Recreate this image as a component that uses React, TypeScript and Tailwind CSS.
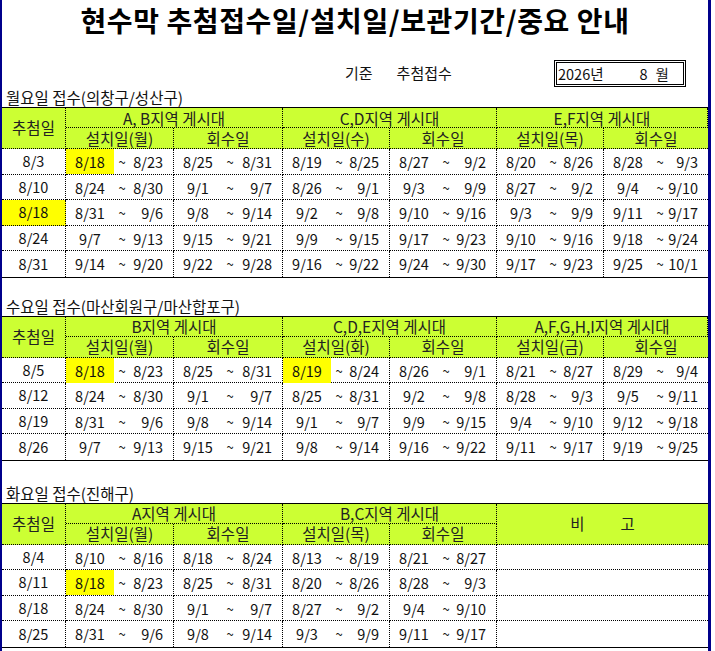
import React from "react";

type R = [string, string, boolean?];
type Row = { d: string; dh?: boolean; r: R[] };
type Group = { name: string; sub: string };
type Sec = { title: string; groups: Group[]; rows: Row[]; note?: boolean };

const sections: Sec[] = [
  {
    title: "월요일 접수(의창구/성산구)",
    groups: [
      { name: "A, B지역 게시대", sub: "설치일(월)" },
      { name: "C,D지역 게시대", sub: "설치일(수)" },
      { name: "E,F지역 게시대", sub: "설치일(목)" },
    ],
    rows: [
      { d: "8/3", r: [["8/18", "8/23", true], ["8/25", "8/31"], ["8/19", "8/25"], ["8/27", "9/2"], ["8/20", "8/26"], ["8/28", "9/3"]] },
      { d: "8/10", r: [["8/24", "8/30"], ["9/1", "9/7"], ["8/26", "9/1"], ["9/3", "9/9"], ["8/27", "9/2"], ["9/4", "9/10"]] },
      { d: "8/18", dh: true, r: [["8/31", "9/6"], ["9/8", "9/14"], ["9/2", "9/8"], ["9/10", "9/16"], ["9/3", "9/9"], ["9/11", "9/17"]] },
      { d: "8/24", r: [["9/7", "9/13"], ["9/15", "9/21"], ["9/9", "9/15"], ["9/17", "9/23"], ["9/10", "9/16"], ["9/18", "9/24"]] },
      { d: "8/31", r: [["9/14", "9/20"], ["9/22", "9/28"], ["9/16", "9/22"], ["9/24", "9/30"], ["9/17", "9/23"], ["9/25", "10/1"]] },
    ],
  },
  {
    title: "수요일 접수(마산회원구/마산합포구)",
    groups: [
      { name: "B지역 게시대", sub: "설치일(월)" },
      { name: "C,D,E지역 게시대", sub: "설치일(화)" },
      { name: "A,F,G,H,I지역 게시대", sub: "설치일(금)" },
    ],
    rows: [
      { d: "8/5", r: [["8/18", "8/23", true], ["8/25", "8/31"], ["8/19", "8/24", true], ["8/26", "9/1"], ["8/21", "8/27"], ["8/29", "9/4"]] },
      { d: "8/12", r: [["8/24", "8/30"], ["9/1", "9/7"], ["8/25", "8/31"], ["9/2", "9/8"], ["8/28", "9/3"], ["9/5", "9/11"]] },
      { d: "8/19", r: [["8/31", "9/6"], ["9/8", "9/14"], ["9/1", "9/7"], ["9/9", "9/15"], ["9/4", "9/10"], ["9/12", "9/18"]] },
      { d: "8/26", r: [["9/7", "9/13"], ["9/15", "9/21"], ["9/8", "9/14"], ["9/16", "9/22"], ["9/11", "9/17"], ["9/19", "9/25"]] },
    ],
  },
  {
    title: "화요일 접수(진해구)",
    note: true,
    groups: [
      { name: "A지역 게시대", sub: "설치일(월)" },
      { name: "B,C지역 게시대", sub: "설치일(목)" },
    ],
    rows: [
      { d: "8/4", r: [["8/10", "8/16"], ["8/18", "8/24"], ["8/13", "8/19"], ["8/21", "8/27"]] },
      { d: "8/11", r: [["8/18", "8/23", true], ["8/25", "8/31"], ["8/20", "8/26"], ["8/28", "9/3"]] },
      { d: "8/18", r: [["8/24", "8/30"], ["9/1", "9/7"], ["8/27", "9/2"], ["9/4", "9/10"]] },
      { d: "8/25", r: [["8/31", "9/6"], ["9/8", "9/14"], ["9/3", "9/9"], ["9/11", "9/17"]] },
    ],
  },
];

function Table({ s }: { s: Sec }) {
  const n = s.rows.length;
  return (
    <div className="grid grid-cols-[64px_108px_109px_107px_107px_107px_104px] border-t border-b border-black text-[#111]">
      <div className="row-span-2 bg-[#ccff33] border-r border-b border-dotted border-black flex items-center justify-center text-[15.5px] text-[#222]">
        추첨일
      </div>
      {s.groups.map((g, i) => (
        <div
          key={"g" + i}
          className="col-span-2 h-[20px] bg-[#ccff33] border-r border-b border-dotted border-black flex items-center justify-center text-[15.5px] leading-[20px] text-[#222]"
        >
          {g.name}
        </div>
      ))}
      {s.note && (
        <div className="col-span-2 row-span-2 bg-[#ccff33] border-b border-dotted border-black flex items-center justify-center text-[15.5px] text-[#222]">
          <span>비</span>
          <span className="ml-[36px]">고</span>
        </div>
      )}
      {s.groups.map((g, i) => (
        <React.Fragment key={"s" + i}>
          <div className="h-[21px] bg-[#ccff33] border-r border-b border-dotted border-black flex items-center justify-center text-[15.5px] leading-[21px] text-[#222]">
            {g.sub}
          </div>
          <div
            className={
              "h-[21px] bg-[#ccff33] border-b border-dotted border-black flex items-center justify-center text-[15.5px] leading-[21px] text-[#222] " +
              (i === 2 ? "" : "border-r")
            }
          >
            회수일
          </div>
        </React.Fragment>
      ))}
      {s.rows.map((row, ri) => {
        const last = ri === n - 1;
        const bb = last ? "" : "border-b";
        return (
          <React.Fragment key={"r" + ri}>
            <div
              className={
                "h-[25.5px] border-r border-dotted border-black flex items-center justify-center text-[14.5px] " +
                bb +
                (row.dh ? " bg-[#ffff00]" : "")
              }
            >
              {row.d}
            </div>
            {row.r.map(([a, b, hl], ci) => {
              const isLastCol = ci === 5;
              return (
                <div
                  key={ci}
                  className={
                    "h-[25.5px] border-dotted border-black grid grid-cols-[48px_16px_1fr] text-[14.5px] leading-[25px] " +
                    bb +
                    (isLastCol ? "" : " border-r")
                  }
                >
                  <div className={"text-center " + (hl ? "bg-[#ffff00]" : "")}>{a}</div>
                  <div className="text-center text-[13px]">~</div>
                  <div className="text-right pr-[10px]">{b}</div>
                </div>
              );
            })}
            {s.note && <div className={"col-span-2 h-[25.5px] border-dotted border-black " + bb}></div>}
          </React.Fragment>
        );
      })}
    </div>
  );
}

export default function App() {
  return (
    <div className="w-[715px] h-[651px] bg-white overflow-hidden font-['Noto_Sans_CJK_KR',sans-serif]">
      <div className="w-[711px] h-[651px] border-l-[2px] border-r-[3px] border-[#00008b] flex flex-col">
        <div className="h-[40px] flex items-center justify-center text-[28px] font-bold text-black tracking-[0.6px]">
          현수막 추첨접수일/설치일/보관기간/중요 안내
        </div>
        <div className="h-[48px] flex items-end pb-[1px] text-[15px] text-[#111]">
          <div className="h-[27px] flex items-center">
            <span className="ml-[343px]">기준</span>
            <span className="ml-[24px]">추첨접수</span>
          </div>
          <div className="ml-auto mr-[22px] w-[132px] h-[27px] border-[3px] border-double border-black flex items-center text-[14.5px] leading-[20px]">
            <span className="ml-[1px]">2026년</span>
            <span className="ml-[36px]">8</span>
            <span className="ml-[8px]">월</span>
          </div>
        </div>
        {sections.map((s, i) => (
          <div key={i} className={i === 0 ? "" : i === 1 ? "mt-[19px]" : "mt-[23px]"}>
            <div className="h-[19px] pl-[4px] text-[15.5px] leading-[19px] text-[#111]">{s.title}</div>
            <Table s={s} />
          </div>
        ))}
      </div>
    </div>
  );
}
